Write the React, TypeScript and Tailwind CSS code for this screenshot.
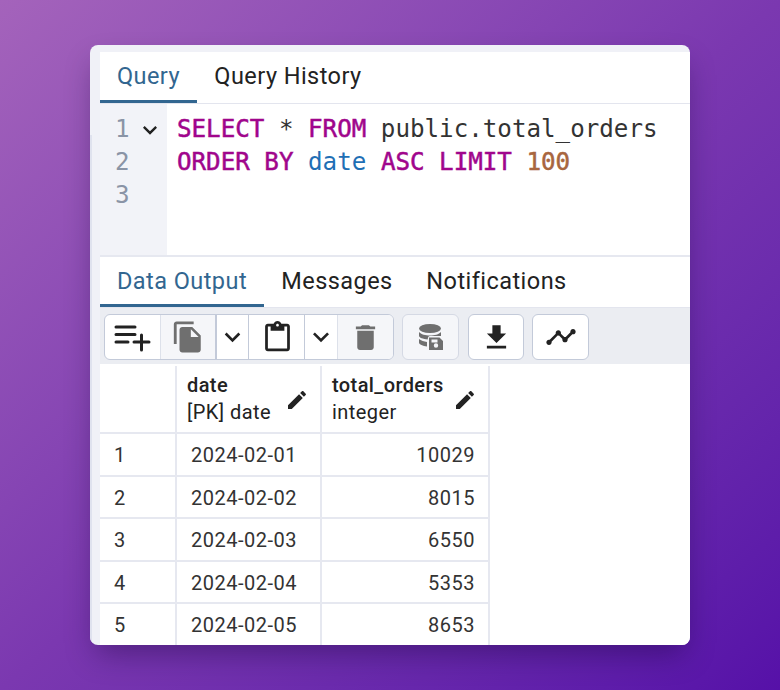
import type { ReactNode } from "react";

const rows = [
  ["1", "2024-02-01", "10029"],
  ["2", "2024-02-02", "8015"],
  ["3", "2024-02-03", "6550"],
  ["4", "2024-02-04", "5353"],
  ["5", "2024-02-05", "8653"],
];

const icons = {
  copy: "M16 1H4c-1.1 0-2 .9-2 2v14h2V3h12V1zm-1 4l6 6v10c0 1.1-.9 2-2 2H7.99C6.89 23 6 22.1 6 21l.01-14c0-1.1.89-2 1.99-2h7zm-1 7h5.5L14 6.5V12z",
  paste: "M19 2h-4.18C14.4.84 13.3 0 12 0c-1.3 0-2.4.84-2.82 2H5c-1.1 0-2 .9-2 2v16c0 1.1.9 2 2 2h14c1.1 0 2-.9 2-2V4c0-1.1-.9-2-2-2zm-7 0c.55 0 1 .45 1 1s-.45 1-1 1-1-.45-1-1 .45-1 1-1zm7 18H5V4h2v3h10V4h2v16z",
  chevron: "M7.41 8.59 12 13.17l4.59-4.58L18 10l-6 6-6-6 1.41-1.41z",
  trash: "M6 19c0 1.1.9 2 2 2h8c1.1 0 2-.9 2-2V7H6v12zM19 4h-3.5l-1-1h-5l-1 1H5v2h14V4z",
  download: "M19 9h-4V3H9v6H5l7 7 7-7zM5 18v2h14v-2H5z",
  graph: "M23 8c0 1.1-.9 2-2 2-.18 0-.35-.02-.51-.07l-3.56 3.55c.05.16.07.34.07.52 0 1.1-.9 2-2 2s-2-.9-2-2c0-.18.02-.36.07-.52l-2.55-2.55c-.16.05-.34.07-.52.07s-.36-.02-.52-.07l-4.55 4.56c.05.16.07.33.07.51 0 1.1-.9 2-2 2s-2-.9-2-2 .9-2 2-2c.18 0 .35.02.51.07l4.56-4.55C8.02 9.36 8 9.18 8 9c0-1.1.9-2 2-2s2 .9 2 2c0 .18-.02.36-.07.52l2.55 2.55c.16-.05.34-.07.52-.07s.36.02.52.07l3.55-3.56C19.02 8.35 19 8.18 19 8c0-1.1.9-2 2-2s2 .9 2 2z",
  edit: "M3 17.25V21h3.75L17.81 9.94l-3.75-3.75L3 17.25zM20.71 7.04c.39-.39.39-1.02 0-1.41l-2.34-2.34c-.39-.39-1.02-.39-1.41 0l-1.83 1.83 3.75 3.75 1.83-1.83z",
};

function Icon({ d, className }: { d: string; className: string }) {
  return (
    <svg viewBox="0 0 24 24" fill="currentColor" className={className}>
      <path d={d} />
    </svg>
  );
}

function AddRowIcon() {
  return (
    <svg viewBox="0 0 40 40" className="w-[40px] h-[40px] text-[#222222]" fill="none" stroke="currentColor" strokeWidth="3" strokeLinecap="round">
      <path d="M3 10h19M3 17.500h19M3 25h12M21 25h15M28.500 18v15" />
    </svg>
  );
}

function DbIcon() {
  return (
    <svg viewBox="0 0 24 26" className="w-[24px] h-[26px] text-[#6f6f6f]" fill="currentColor">
      <ellipse cx="11" cy="4.500" rx="11" ry="4.500" />
      <path d="M0 8c2 2.500 6.500 3.500 11 3.500S20 10.500 22 8v4H11c-1.500 0-2 1-2.300 3.500C4 15 0 13.500 0 12z" />
      <path d="M0 15c2 1.500 5 2.500 8 3v4.500C4 22 0 20.500 0 18.500z" />
      <path fillRule="evenodd" d="M10 13.500h10.500L24 17v9H10zM12.500 15.500v3h6v-3zM17 19.300a2.200 2.200 0 1 0 0 4.400 2.200 2.200 0 0 0 0-4.400z" />
    </svg>
  );
}

function Tab({ label, active, width }: { label: string; active?: boolean; width: string }) {
  return (
    <div
      className={`${width} flex items-center justify-center h-full pt-[2px] border-b-[3px] ${
        active ? "border-[#326690] text-[#326690]" : "border-transparent text-[#222222]"
      }`}
    >
      {label}
    </div>
  );
}

function ToolButton({ children, width, className }: { children: ReactNode; width: string; className: string }) {
  return <div className={`${width} h-full flex items-center justify-center ${className}`}>{children}</div>;
}

function HeaderCell({ width, name, type }: { width: string; name: string; type: string }) {
  return (
    <div className={`${width} shrink-0 h-full flex items-center justify-between pl-[10px] pr-[11px] border-r-2 border-[#e6e8f0]`}>
      <div className="flex flex-col text-[20px] leading-[27px] text-[#222222]">
        <span className="font-medium tracking-[0.4px]">{name}</span>
        <span className="tracking-[0.45px]">{type}</span>
      </div>
      <Icon d={icons.edit} className="w-[24px] h-[24px] text-[#222222] mt-[2px]" />
    </div>
  );
}

export default function App() {
  return (
    <div className="w-[780px] h-[690px] flex items-center justify-center overflow-hidden bg-gradient-to-br from-[#a463bb] via-[#7b38b0] to-[#5610a8] font-['Roboto',sans-serif]">
      <div className="w-[600px] h-[600px] flex rounded-[8px] overflow-hidden bg-[#f0f1f7] shadow-[0_14px_30px_-6px_rgba(20,0,50,0.4)]">
        {/* left gutter of the app frame */}
        <div className="w-[10px] shrink-0 flex flex-col">
          <div className="h-[90px] shrink-0" />
          <div className="flex-1 border-l-2 border-[#dfe2ee]" />
        </div>

        <div className="flex-1 min-w-0 flex flex-col pt-[7px]">
          {/* query tabs */}
          <div className="h-[52px] shrink-0 flex bg-white border-b border-[#e3e5ee] text-[23.5px] tracking-[0.45px]">
            <Tab label="Query" active width="w-[97px]" />
            <Tab label="Query History" width="w-[182px]" />
          </div>

          {/* editor */}
          <div className="h-[153px] shrink-0 flex bg-white border-b-2 border-[#e6e8f0] font-['DejaVu_Sans_Mono',monospace] text-[24.2px] leading-[33px]">
            <div className="w-[67px] shrink-0 bg-[#f2f3f8] pt-[9px] flex flex-col text-[#8a94a6]">
              <div className="flex items-center h-[33px] pl-[15px]">
                1
                <Icon d={icons.chevron} className="w-[28px] h-[28px] text-[#222222] ml-[6px]" />
              </div>
              <div className="h-[33px] pl-[15px]">2</div>
              <div className="h-[33px] pl-[15px]">3</div>
            </div>
            <div className="pl-[10px] pt-[9px] whitespace-nowrap text-[#333333]">
              <div>
                <span className="text-[#a0058c] [-webkit-text-stroke:0.5px]">SELECT</span> * <span className="text-[#a0058c] [-webkit-text-stroke:0.5px]">FROM</span> public.total_orders
              </div>
              <div>
                <span className="text-[#a0058c] [-webkit-text-stroke:0.5px]">ORDER BY</span> <span className="text-[#1f6fb5]">date</span>{" "}
                <span className="text-[#a0058c] [-webkit-text-stroke:0.5px]">ASC LIMIT</span> <span className="text-[#a8663f] [-webkit-text-stroke:0.5px]">100</span>
              </div>
            </div>
          </div>

          {/* output tabs */}
          <div className="h-[51px] shrink-0 flex bg-white border-b border-[#e3e5ee] text-[23.5px] tracking-[0.45px]">
            <Tab label="Data Output" active width="w-[164px]" />
            <Tab label="Messages" width="w-[146px]" />
            <Tab label="Notifications" width="w-[173px]" />
          </div>

          {/* toolbar */}
          <div className="h-[56px] shrink-0 flex items-start gap-[8px] pl-[4px] pt-[6px] bg-[#ebedf2]">
            <div className="h-[46px] flex rounded-[6px] border border-[#c3cad9] overflow-hidden bg-white">
              <ToolButton width="w-[56px]" className="border-r border-[#dde1ea]">
                <AddRowIcon />
              </ToolButton>
              <ToolButton width="w-[56px]" className="bg-[#f5f6f9] border-r-2 border-[#c3cad9]">
                <Icon d={icons.copy} className="w-[34px] h-[34px] text-[#6f6f6f]" />
              </ToolButton>
              <ToolButton width="w-[32px]" className="border-r border-[#c3cad9]">
                <Icon d={icons.chevron} className="w-[32px] h-[32px] text-[#222222]" />
              </ToolButton>
              <ToolButton width="w-[56px]" className="border-r border-[#c3cad9]">
                <Icon d={icons.paste} className="w-[33px] h-[33px] text-[#222222] ml-[1px]" />
              </ToolButton>
              <ToolButton width="w-[33px]" className="border-r border-[#dde1ea]">
                <Icon d={icons.chevron} className="w-[32px] h-[32px] text-[#222222]" />
              </ToolButton>
              <ToolButton width="w-[55px]" className="bg-[#f5f6f9]">
                <Icon d={icons.trash} className="w-[33px] h-[33px] text-[#6f6f6f]" />
              </ToolButton>
            </div>
            <ToolButton width="w-[57px]" className="!h-[46px] rounded-[6px] border border-[#d5d9e4] bg-[#f5f6f9]">
              <DbIcon />
            </ToolButton>
            <ToolButton width="w-[56px]" className="!h-[46px] rounded-[6px] border border-[#c3cad9] bg-white ml-[1px]">
              <Icon d={icons.download} className="w-[33px] h-[33px] text-[#222222]" />
            </ToolButton>
            <ToolButton width="w-[57px]" className="!h-[46px] rounded-[6px] border border-[#c3cad9] bg-white">
              <Icon d={icons.graph} className="w-[32px] h-[32px] text-[#222222]" />
            </ToolButton>
          </div>

          {/* result grid */}
          <div className="flex-1 min-h-0 overflow-hidden bg-white pt-[2px] text-[20px] tracking-[0.5px] text-[#333333]">
            <div className="w-[390px]">
              <div className="h-[68px] flex border-b-2 border-[#e6e8f0]">
                <div className="w-[77px] shrink-0 border-r-2 border-[#e6e8f0]" />
                <HeaderCell width="w-[145px]" name="date" type="[PK] date" />
                <HeaderCell width="w-[168px]" name="total_orders" type="integer" />
              </div>
              {rows.map((row) => (
                <div key={row[0]} className="h-[42.5px] flex items-center border-b-2 border-[#e6e8f0]">
                  <div className="w-[77px] h-full shrink-0 flex items-center pt-[2px] pl-[14px] border-r-2 border-[#e6e8f0]">{row[0]}</div>
                  <div className="w-[145px] h-full shrink-0 flex items-center pt-[2px] pl-[14px] border-r-2 border-[#e6e8f0]">{row[1]}</div>
                  <div className="w-[168px] h-full shrink-0 flex items-center justify-end pt-[2px] pr-[13px] border-r-2 border-[#e6e8f0]">{row[2]}</div>
                </div>
              ))}
            </div>
          </div>
        </div>
      </div>
    </div>
  );
}
